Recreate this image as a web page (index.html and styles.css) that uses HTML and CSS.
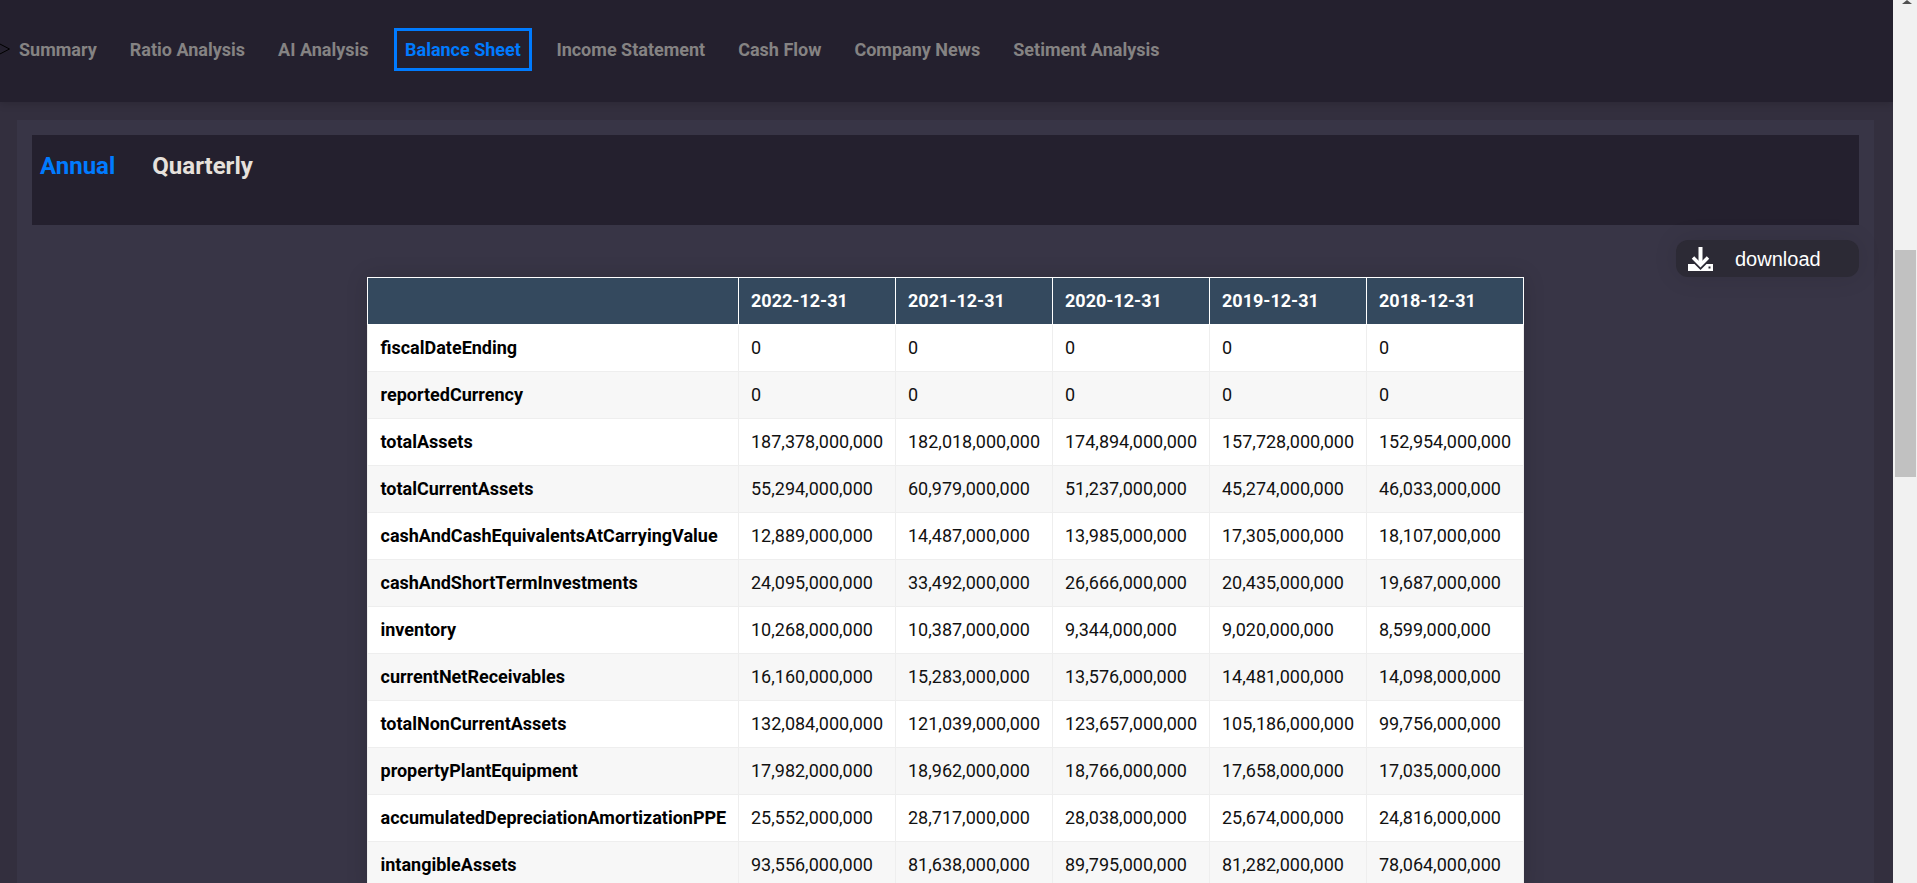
FILE: index.html
```html
<!DOCTYPE html>
<html lang="en">
<head>
    <meta charset="UTF-8">
    <meta name="viewport" content="width=device-width, initial-scale=1.0">
    <title>Balance Sheet</title>
    <link rel="stylesheet" href="styles.css">
</head>
<body>
    <div class="page">
        <nav class="topnav">
            <svg class="nav-arrow" width="10" height="14" viewBox="0 0 10 14"><path d="M-2 1 L9.5 7 L-2 13" fill="none" stroke="#000" stroke-width="1"/></svg>
            <a class="nav-item">Summary</a>
            <a class="nav-item">Ratio Analysis</a>
            <a class="nav-item">AI Analysis</a>
            <a class="nav-item active">Balance Sheet</a>
            <a class="nav-item">Income Statement</a>
            <a class="nav-item">Cash Flow</a>
            <a class="nav-item">Company News</a>
            <a class="nav-item">Setiment Analysis</a>
        </nav>
        <main class="content">
            <section class="panel">
                <div class="period-tabs">
                    <a class="period active">Annual</a>
                    <a class="period">Quarterly</a>
                </div>
                <div class="toolbar">
                    <button class="download">
                        <svg width="25" height="24" viewBox="0 0 25 24">
                            <rect x="10.5" y="0" width="4" height="16" fill="#fff"/>
                            <path d="M5 10.5 L12.5 18 L20 10.5" fill="none" stroke="#fff" stroke-width="3.5"/>
                            <path d="M0 24 V17 H6.5 L12.5 23 L18.5 17 H25 V24 Z" fill="#fff"/>
                            <rect x="20.5" y="19.5" width="2" height="2" fill="#2c2a35"/>
                        </svg>
                        <span class="download-label">download</span>
                    </button>
                </div>
                <table class="sheet">
                    <thead>
                        <tr><th></th><th>2022-12-31</th><th>2021-12-31</th><th>2020-12-31</th><th>2019-12-31</th><th>2018-12-31</th></tr>
                    </thead>
                    <tbody>
                        <tr><td>fiscalDateEnding</td><td>0</td><td>0</td><td>0</td><td>0</td><td>0</td></tr>
                        <tr><td>reportedCurrency</td><td>0</td><td>0</td><td>0</td><td>0</td><td>0</td></tr>
                        <tr><td>totalAssets</td><td>187,378,000,000</td><td>182,018,000,000</td><td>174,894,000,000</td><td>157,728,000,000</td><td>152,954,000,000</td></tr>
                        <tr><td>totalCurrentAssets</td><td>55,294,000,000</td><td>60,979,000,000</td><td>51,237,000,000</td><td>45,274,000,000</td><td>46,033,000,000</td></tr>
                        <tr><td>cashAndCashEquivalentsAtCarryingValue</td><td>12,889,000,000</td><td>14,487,000,000</td><td>13,985,000,000</td><td>17,305,000,000</td><td>18,107,000,000</td></tr>
                        <tr><td>cashAndShortTermInvestments</td><td>24,095,000,000</td><td>33,492,000,000</td><td>26,666,000,000</td><td>20,435,000,000</td><td>19,687,000,000</td></tr>
                        <tr><td>inventory</td><td>10,268,000,000</td><td>10,387,000,000</td><td>9,344,000,000</td><td>9,020,000,000</td><td>8,599,000,000</td></tr>
                        <tr><td>currentNetReceivables</td><td>16,160,000,000</td><td>15,283,000,000</td><td>13,576,000,000</td><td>14,481,000,000</td><td>14,098,000,000</td></tr>
                        <tr><td>totalNonCurrentAssets</td><td>132,084,000,000</td><td>121,039,000,000</td><td>123,657,000,000</td><td>105,186,000,000</td><td>99,756,000,000</td></tr>
                        <tr><td>propertyPlantEquipment</td><td>17,982,000,000</td><td>18,962,000,000</td><td>18,766,000,000</td><td>17,658,000,000</td><td>17,035,000,000</td></tr>
                        <tr><td>accumulatedDepreciationAmortizationPPE</td><td>25,552,000,000</td><td>28,717,000,000</td><td>28,038,000,000</td><td>25,674,000,000</td><td>24,816,000,000</td></tr>
                        <tr><td>intangibleAssets</td><td>93,556,000,000</td><td>81,638,000,000</td><td>89,795,000,000</td><td>81,282,000,000</td><td>78,064,000,000</td></tr>
                    </tbody>
                </table>
            </section>
        </main>
    </div>
    <div class="scrollbar">
        <div class="scroll-arrow"></div>
        <div class="scroll-thumb"></div>
    </div>
</body>
</html>
```

FILE: styles.css
```css
html, body {
    height: 100%;
}
body {
    font-family: Roboto, sans-serif;
    display: flex;
    height: 100vh;
    margin: 0;
    overflow: hidden;
    background-color: #332f3e;
}
.page {
    flex: 1;
    min-width: 0;
    overflow: hidden;
}
.topnav {
    position: relative;
    z-index: 1;
    display: flex;
    align-items: center;
    gap: 13px;
    height: 102px;
    padding: 0 0 4px 0;
    box-sizing: border-box;
    background-color: #24202e;
    box-shadow: 0 2px 8px rgba(0,0,0,0.15);
}
.nav-arrow {
    flex: none;
    margin-right: -14px;
}
.nav-item {
    padding: 7px 7px;
    border: 3px solid transparent;
    color: #858383;
    font-size: 18px;
    font-weight: 700;
    line-height: 23px;
}
.nav-item.active {
    margin: 0 1px 0 2px;
    padding: 7px 8.5px;
    color: #007bff;
    border-color: #007bff;
}
.content {
    padding: 18px 19px 0 17px;
}
.panel {
    padding: 15px;
    background-color: #383546;
}
.period-tabs {
    display: flex;
    gap: 37px;
    height: 90px;
    padding: 16px 0 0 8px;
    box-sizing: border-box;
    background-color: #24202e;
}
.period {
    color: #e6e1dc;
    font-size: 24px;
    font-weight: 700;
    line-height: 30px;
}
.period.active {
    color: #007bff;
}
.toolbar {
    display: flex;
    justify-content: flex-end;
    margin-top: 15px;
}
.download {
    display: flex;
    align-items: center;
    gap: 22px;
    width: 183px;
    height: 37px;
    padding: 0 0 0 12px;
    border: none;
    border-radius: 12px;
    background-color: #2c2a35;
    color: #fff;
    font-family: "Liberation Sans", Arial, sans-serif;
    font-size: 20px;
    box-shadow: 0 0 24px rgba(0,0,0,0.1);
}
.download-label {
    padding-top: 1px;
}
.sheet {
    width: 1157px;
    margin: 0 auto;
    table-layout: fixed;
    border-collapse: collapse;
    background-color: #fff;
    box-shadow: 0 0 20px rgba(0,0,0,0.15);
    color: #111;
    font-size: 18px;
}
.sheet th {
    height: 47px;
    padding: 0 12px 1px;
    box-sizing: border-box;
    border: 1px solid #fff;
    background-color: #34495e;
    color: #fff;
    font-weight: 700;
    text-align: left;
    width: 157px;
}
.sheet th:first-child {
    width: 371px;
}
.sheet td {
    height: 47px;
    padding: 0 12px 2px;
    box-sizing: border-box;
    border: 1px solid #eee;
    border-top: none;
}
.sheet td:first-child {
    padding-left: 12.5px;
    color: #000;
    font-weight: 700;
}
.sheet tbody tr:nth-child(even) {
    background-color: #f7f7f7;
}
.scrollbar {
    flex: none;
    width: 24px;
    padding: 0 1px 0 2px;
    box-sizing: border-box;
    background-color: #f1f1f1;
}
.scroll-arrow {
    width: 0;
    height: 0;
    margin: 0 0 246px 7px;
    border-left: 5px solid transparent;
    border-right: 5px solid transparent;
    border-bottom: 4px solid #505050;
}
.scroll-thumb {
    height: 227px;
    background-color: #c1c1c1;
}
```
